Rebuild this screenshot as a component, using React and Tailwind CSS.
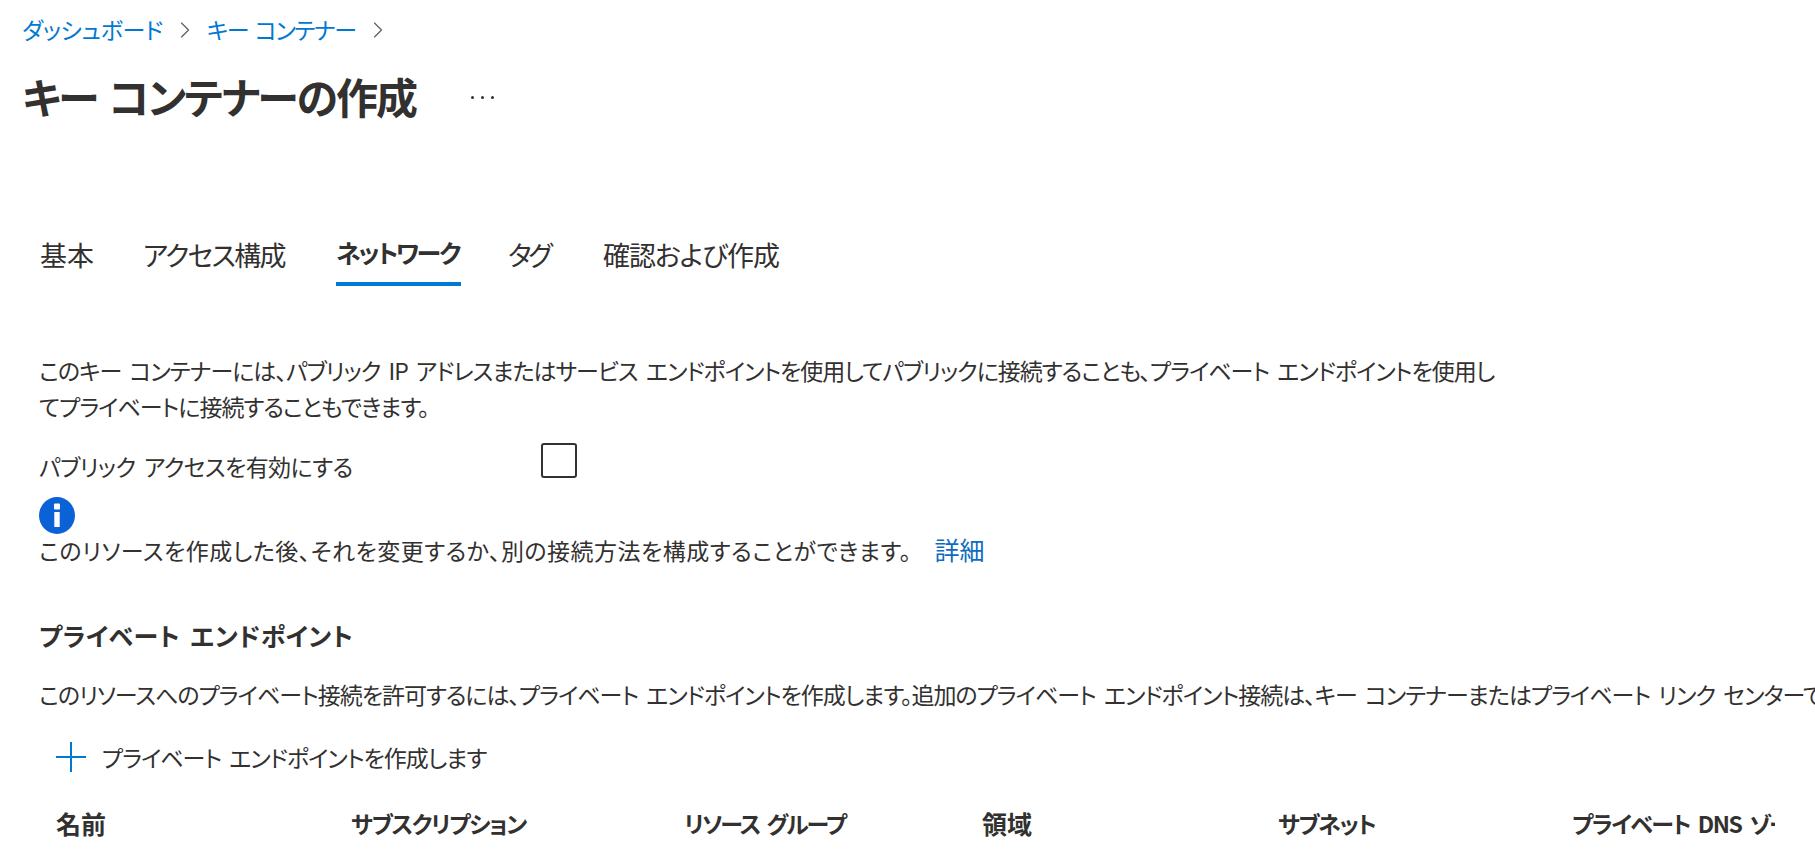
import { ChevronRight } from 'lucide-react'

const columns = [
  { label: '名前', width: 'w-[295px]', text: 'text-[25px]' },
  { label: 'サブスクリプション', width: 'w-[333px]', text: 'text-[23px] tracking-[-1.4px]' },
  { label: 'リソース グループ', width: 'w-[298px]', text: 'text-[23px] tracking-[-2px] [word-spacing:4px]' },
  { label: '領域', width: 'w-[296px]', text: 'text-[25px]' },
  { label: 'サブネット', width: 'w-[294px]', text: 'text-[23px] tracking-[-1.5px]' },
  { label: 'プライベート DNS ゾーン', width: 'w-[203px]', text: 'text-[23px] tracking-[-1.5px] [word-spacing:4px]' },
]

const tabs = [
  { label: '基本', width: 'w-[103px]', text: 'text-[27px]' },
  { label: 'アクセス構成', width: 'w-[193px]', text: 'text-[27px] tracking-[-1.7px]' },
  { label: 'ネットワーク', width: 'w-[172px]', text: 'text-[25px] tracking-[-2.3px] font-bold', active: true },
  { label: 'タグ', width: 'w-[95px]', text: 'text-[27px] tracking-[-3.4px]' },
  { label: '確認および作成', width: 'w-[190px]', text: 'text-[27px] tracking-[-1.1px]' },
]

function InfoIcon() {
  return (
    <svg width="36" height="37" viewBox="0 0 36 37" className="block">
      <ellipse cx="18" cy="18.5" rx="18" ry="18.5" fill="#0b62d6" />
      <rect x="15" y="6.5" width="6" height="6" rx="1" fill="#fff" />
      <rect x="15.3" y="15" width="5.4" height="15" fill="#fff" />
    </svg>
  )
}

function PlusIcon() {
  return (
    <svg width="30" height="30" viewBox="0 0 30 30" className="block">
      <path d="M0 15H30M15 0V30" stroke="#0078d4" strokeWidth="2" fill="none" />
    </svg>
  )
}

export default function App() {
  return (
    <div className="h-[859px] w-[1815px] overflow-hidden bg-white font-['Noto_Sans_CJK_JP','Liberation_Sans',sans-serif] text-[#323130] [font-feature-settings:'palt']">
      <div className="px-[22px]">
        <nav className="flex h-[58px] items-center pt-[1px] text-[23px] text-[#0078d4]">
          <a className="tracking-[-0.3px]">ダッシュボード</a>
          <ChevronRight size={28} strokeWidth={1} className="mx-[8px] text-[#605e5c]" />
          <a className="tracking-[-1.4px] [word-spacing:3px]">キー コンテナー</a>
          <ChevronRight size={28} strokeWidth={1} className="mx-[8px] text-[#605e5c]" />
        </nav>
        <div className="flex h-[74px] items-center">
          <h1 className="text-[42px] font-bold tracking-[-2px] [word-spacing:4px]">キー コンテナーの作成</h1>
          <span className="ml-[55px] mt-[5px] flex gap-[7px]">
            <i className="h-[3px] w-[3px] rounded-full bg-[#323130]" />
            <i className="h-[3px] w-[3px] rounded-full bg-[#323130]" />
            <i className="h-[3px] w-[3px] rounded-full bg-[#323130]" />
          </span>
        </div>
      </div>

      <div className="mt-[92px] flex h-[62px] pl-[40px]">
        {tabs.map((tab) => (
          <div key={tab.label} className={`${tab.width} flex h-full flex-col`}>
            <span className={`flex flex-1 items-center whitespace-nowrap ${tab.text}`}>{tab.label}</span>
            {tab.active && <span className="h-1 w-[125px] bg-[#0078d4]" />}
          </div>
        ))}
      </div>

      <div className="pl-[39px] text-[23px]">
        <p className="mt-[66px] whitespace-nowrap leading-[36px] tracking-[-1px] [word-spacing:4px]">
          このキー コンテナーには、パブリック IP アドレスまたはサービス エンドポイントを使用してパブリックに接続することも、プライベート エンドポイントを使用し
          <br />
          てプライベートに接続することもできます。
        </p>
        <div className="mt-[24px] flex h-[36px] items-center">
          <label className="w-[502px] tracking-[-0.6px] [word-spacing:4px]">パブリック アクセスを有効にする</label>
          <span className="-mt-[12px] h-[35px] w-[36px] rounded-[3px] border-2 border-[#323130]" />
        </div>
        <div className="mt-[13px]">
          <InfoIcon />
        </div>
        <p className="mt-[1px] whitespace-nowrap leading-[28px] tracking-[0.5px]">
          このリソースを作成した後、それを変更するか、別の接続方法を構成することができます。
          <a className="ml-[23px] text-[25px] tracking-[0px] text-[#0f6cbd]">詳細</a>
        </p>
        <h2 className="mt-[53px] text-[25px] font-bold leading-[36px] tracking-[0.5px] [word-spacing:4px]">プライベート エンドポイント</h2>
        <p className="mt-[24px] whitespace-nowrap leading-[34px] tracking-[-1px] [word-spacing:4px]">
          このリソースへのプライベート接続を許可するには、プライベート エンドポイントを作成します。追加のプライベート エンドポイント接続は、キー コンテナーまたはプライベート リンク センターで
        </p>
      </div>

      <div className="mt-[28px] flex h-[36px] items-center pl-[56px] text-[23px] tracking-[-1px] [word-spacing:4px]">
        <PlusIcon />
        <span className="ml-[16px]">プライベート エンドポイントを作成します</span>
      </div>

      <div className="mt-[30px] flex w-[1776px] overflow-hidden pl-[56px] font-bold leading-[36px]">
        {columns.map((col) => (
          <div key={col.label} className={`${col.width} ${col.text} shrink-0 overflow-hidden whitespace-nowrap`}>
            {col.label}
          </div>
        ))}
      </div>
    </div>
  )
}
